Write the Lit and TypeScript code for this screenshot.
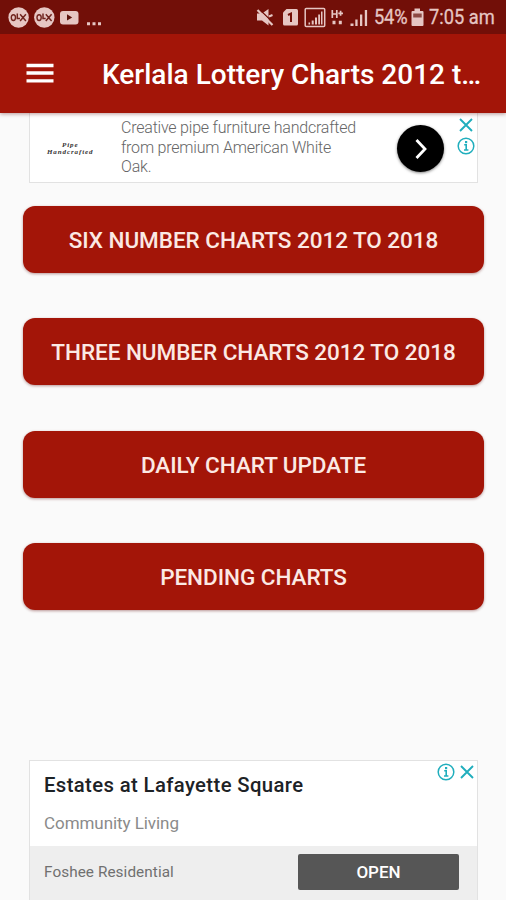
import { LitElement, html, css, svg } from "lit";
import { customElement } from "lit/decorators.js";

const closeIcon = html`<svg class="close" width="14" height="14" viewBox="0 0 14 14">
  <path d="M1 1L13 13M13 1L1 13" fill="none" stroke="#20aebd" stroke-width="1.9" />
</svg>`;

const infoIcon = html`<svg class="info" width="18" height="18" viewBox="0 0 18 18">
  <circle cx="9" cy="9" r="7.8" fill="none" stroke="#20aebd" stroke-width="1.5" />
  <path d="M7.2 7.8H9.2V13M7 13H11.400" fill="none" stroke="#20aebd" stroke-width="1.600" />
  <rect x="8" y="4" width="2.2" height="2.2" fill="#20aebd" />
</svg>`;

const olx = (x: number) => svg`
  <circle cx="${x}" cy="17.5" r="10.2" fill="#e6c6c3" />
  <ellipse cx="${x - 5.2}" cy="17.6" rx="2.1" ry="2.9" fill="none" stroke="#71251f" stroke-width="1.4" />
  <path d="M${x - 1.3} 13.5V18.6H${x + 1.4}M${x + 1.5} 14.2L${x + 7.3} 21M${x + 7.3} 14.2L${x + 1.5} 21" fill="none" stroke="#71251f" stroke-width="1.5" />`;

@customElement("app-root")
export class AppRoot extends LitElement {
  static styles = css`
    :host {
      display: flex;
      flex-direction: column;
      height: 900px;
      overflow: hidden;
      background: #fafafa;
      font-family: Roboto, sans-serif;
      white-space: nowrap;
    }
    * { box-sizing: border-box; }
    svg { display: block; flex: none; }
    .status {
      height: 34px;
      flex: none;
      display: flex;
      align-items: center;
      background: #720f08;
      color: #e6c6c3;
      z-index: 2;
    }
    .grow { flex: 1; }
    .stat {
      font-size: 18.3px;
      line-height: 38px;
      transform: scaleY(1.14);
      -webkit-text-stroke: 0.25px #e6c6c3;
    }
    .pct { width: 35px; letter-spacing: -0.2px; }
    .time { width: 81px; padding-left: 4px; }
    .bar {
      height: 79px;
      flex: none;
      display: flex;
      align-items: center;
      padding-left: 26px;
      background: #a31508;
      box-shadow: 0 1px 4px rgba(80, 0, 0, 0.4);
      z-index: 1;
    }
    .title {
      margin-left: 48px;
      color: #fff;
      font-size: 28px;
      font-weight: 500;
      line-height: 79px;
      padding-top: 2px;
    }
    .ad {
      margin: 0 28px 0 29px;
      background: #fff;
      border: 1px solid #e2e2e2;
      flex: none;
    }
    .top {
      height: 70px;
      border-top: 0;
      display: flex;
    }
    .logo {
      width: 91px;
      padding: 29px 0 0 17px;
      font: italic bold 7px/7px "Liberation Serif", serif;
      letter-spacing: 0.9px;
      color: #333;
    }
    .logo div:first-child { padding-left: 15px; height: 7px; }
    .copy {
      width: 276px;
      padding-top: 5px;
      font-size: 16px;
      font-weight: 300;
      line-height: 19.7px;
      letter-spacing: -0.21px;
      color: #666;
    }
    .go {
      width: 47px;
      height: 47px;
      margin-top: 12px;
      border-radius: 50%;
      background: #000;
      box-shadow: 0 1px 3px rgba(0, 0, 0, 0.5);
      display: grid;
      place-items: center;
    }
    .side {
      display: flex;
      flex-direction: column;
      align-items: center;
      gap: 5px;
      margin: 5px 0 0 13px;
    }
    .menu {
      flex: 1;
      display: flex;
      flex-direction: column;
      gap: 45.4px;
      padding: 23px 22px 0 23px;
    }
    .btn {
      height: 67px;
      flex: none;
      border: 0;
      padding: 1px 0 0;
      border-radius: 12px;
      background: #a31508;
      color: #fbe9e4;
      font: 500 22.5px Roboto, sans-serif;
      letter-spacing: -0.04px;
      box-shadow: 0 1px 3px rgba(90, 0, 0, 0.4);
    }
    .bottom {
      height: 140px;
      border-bottom: 0;
      display: flex;
      flex-direction: column;
    }
    .info-area {
      height: 85px;
      flex: none;
      display: flex;
      justify-content: space-between;
      padding: 2px 3px 0 14px;
    }
    .name {
      margin-top: 9px;
      font-size: 20.3px;
      font-weight: 500;
      line-height: 26px;
      letter-spacing: 0.38px;
      color: #1d2226;
    }
    .kind {
      margin-top: 14px;
      font-size: 17px;
      line-height: 22px;
      letter-spacing: -0.06px;
      color: #8a8a8a;
    }
    .marks {
      display: flex;
      gap: 5px;
      height: 18px;
      align-items: center;
    }
    .foot {
      flex: 1;
      display: flex;
      align-items: center;
      justify-content: space-between;
      background: #eee;
      padding: 0 18px 2px 14px;
      font-size: 15.3px;
      letter-spacing: 0.08px;
      color: #707070;
    }
    .open {
      width: 161px;
      height: 36px;
      border: 0;
      border-radius: 2px;
      padding: 0;
      background: #565656;
      color: #fff;
      font: 500 17px Roboto, sans-serif;
    }
  `;

  render() {
    return html`
      <div class="status">
        <svg width="110" height="34" viewBox="0 0 110 34">
          ${olx(18.6)}${olx(44.3)}
          <rect x="60" y="11" width="18.5" height="13.5" rx="3" fill="#e6c6c3" />
          <path d="M67 14.3L72.2 17.5L67 20.5Z" fill="#5c120c" />
          <path d="M87 22.3h3v3h-3zM92.5 22.3h3v3h-3zM98 22.3h3v3h-3z" fill="#e6c6c3" />
        </svg>
        <span class="grow"></span>
        <svg width="122" height="34" viewBox="252 0 122 34" fill="#e6c6c3">
          <path d="M257 13.500h5l6.500-4.500v16.500l-6.500-5H257z" />
          <path d="M259.500 9.500L273 22.500" stroke="#720f08" stroke-width="1.200" />
          <path d="M257.500 10L272.500 25" stroke="#e6c6c3" stroke-width="2.200" />
          <path d="M269 16.500l3.500-1.500" stroke="#e6c6c3" stroke-width="2" />
          <path d="M286.500 9H296.500Q298 9 298 10.500V24Q298 25.500 296.500 25.500H284.500Q283 25.500 283 24V12.500Z" />
          <path d="M288 15L291 13.500V22" fill="none" stroke="#720f08" stroke-width="2" />
          <rect x="305.200" y="8.500" width="19.500" height="18" rx="1" fill="none" stroke="#e6c6c3" stroke-width="1.500" />
          <path d="M308.500 22.500h1.600v2h-1.600zM311.700 20.500h2v4h-2zM315 17.500h2v7h-2zM318.200 14.500h1.800v10h-1.800zM321 11.500h1.500v13h-1.500z" />
          <path d="M332.300 10v8M336.800 10v8M332 14h5M338.300 13.300h4.700M340.600 10.800v5" fill="none" stroke="#e6c6c3" stroke-width="1.700" />
          <path d="M332.500 20.800h3v3.500h-3zM338.800 20.800h3v3.500h-3z" />
          <path d="M350.500 23.500h3v2.500h-3zM355.300 19.500h2.300v6.500h-2.300zM360 14.500h2.300v11.500H360zM364.800 10h2.300v16h-2.300z" />
        </svg>
        <span class="stat pct">54%</span>
        <svg width="16" height="34" viewBox="409 0 16 34">
          <path d="M414.500 8.500h5.500V11h2.500q1 0 1 1v13q0 1-1 1h-10q-1 0-1-1V12q0-1 1-1h2z" fill="#e6c6c3" />
          <path d="M413.200 13.500h8.500v4h-8.500z" fill="#8d4842" />
        </svg>
        <span class="stat time">7:05 am</span>
      </div>
      <div class="bar">
        <svg width="28" height="22" viewBox="0 0 28 22">
          <path d="M.5 2.500H27.500M.5 10H27.500M.5 17.800H27.500" fill="none" stroke="#fff" stroke-width="3.300" />
        </svg>
        <div class="title">Kerlala Lottery Charts 2012 t…</div>
      </div>
      <div class="ad top">
        <div class="logo"><div>Pipe</div><div>Handcrafted</div></div>
        <div class="copy">Creative pipe furniture handcrafted<br />from premium American White<br />Oak.</div>
        <div class="go">
          <svg width="14" height="22" viewBox="0 0 14 22">
            <path d="M2.500 2L11 11L2.500 20" fill="none" stroke="#fff" stroke-width="2.800" />
          </svg>
        </div>
        <div class="side">${closeIcon}${infoIcon}</div>
      </div>
      <div class="menu">
        ${[
          "SIX NUMBER CHARTS 2012 TO 2018",
          "THREE NUMBER CHARTS 2012 TO 2018",
          "DAILY CHART UPDATE",
          "PENDING CHARTS",
        ].map((label) => html`<button class="btn">${label}</button>`)}
      </div>
      <div class="ad bottom">
        <div class="info-area">
          <div>
            <div class="name">Estates at Lafayette Square</div>
            <div class="kind">Community Living</div>
          </div>
          <div class="marks">${infoIcon}${closeIcon}</div>
        </div>
        <div class="foot">
          <span>Foshee Residential</span>
          <button class="open">OPEN</button>
        </div>
      </div>
    `;
  }
}
